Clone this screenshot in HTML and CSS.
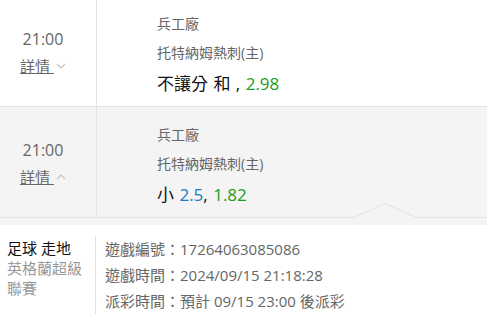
FILE: index.html
```html
<!DOCTYPE html>
<html lang="zh-Hant">

<head>
  <meta charset="UTF-8">
  <title>投注紀錄</title>
  <link rel="stylesheet" href="styles.css">
</head>

<body>

  <div class="bet-list">
    <div class="bet-row">
      <div class="bet-time">
        <div class="time">21:00</div>
        <div class="toggle">
          <a class="details-link">詳情 </a>
          <svg class="chevron" width="10" height="6" viewBox="0 0 10 6">
            <polyline points="1,1 5,5 9,1" fill="none" stroke="#c4c4c4" stroke-width="1.2" />
          </svg>
        </div>
      </div>
      <div class="bet-info">
        <div class="match">兵工廠</div>
        <div class="team">托特納姆熱刺(主)</div>
        <div class="pick">不讓分 和 , <span class="odds">2.98</span></div>
      </div>
    </div>

    <div class="bet-row open">
      <div class="bet-time">
        <div class="time">21:00</div>
        <div class="toggle">
          <a class="details-link">詳情 </a>
          <svg class="chevron" width="10" height="6" viewBox="0 0 10 6">
            <polyline points="1,5 5,1 9,5" fill="none" stroke="#c4c4c4" stroke-width="1.2" />
          </svg>
        </div>
      </div>
      <div class="bet-info">
        <div class="match">兵工廠</div>
        <div class="team">托特納姆熱刺(主)</div>
        <div class="pick">小 <span class="line">2.5</span>, <span class="odds">1.82</span></div>
      </div>
      <svg class="caret" width="64" height="15" viewBox="0 0 64 15">
        <polygon points="0,14.5 32,0.5 64,14.5 64,15 0,15" fill="#f4f4f4" />
        <polyline points="0,14.5 32,0.5 64,14.5" fill="none" stroke="#e2e2e2" stroke-width="1" />
      </svg>
    </div>
  </div>

  <div class="bet-detail">
    <div class="detail-sport">
      <div class="sport">足球 走地</div>
      <div class="league">英格蘭超級聯賽</div>
    </div>
    <div class="detail-info">
      <div>遊戲編號：17264063085086</div>
      <div>遊戲時間：2024/09/15 21:18:28</div>
      <div>派彩時間：預計 09/15 23:00 後派彩</div>
    </div>
  </div>

</body>

</html>
```

FILE: styles.css
```css
html {
  background: #f4f4f4;
}

body {
  margin: 0;
  font-family: "Open Sans", "Noto Sans CJK TC", sans-serif;
  color: #666;
  overflow: hidden;
}

.bet-list {
  margin-top: -4px;
}

.bet-row {
  position: relative;
  display: flex;
  height: 111px;
  box-sizing: border-box;
  border-bottom: 1px solid #e4e4e4;
  background: #fff;
}

.bet-row.open {
  background: #f4f4f4;
}

.bet-time {
  width: 97px;
  box-sizing: border-box;
  padding: 2px 10px 0 0;
  border-right: 1px solid #e2e2e2;
  display: flex;
  flex-direction: column;
  justify-content: center;
  align-items: center;
}

.time {
  font-size: 16px;
  line-height: 26px;
}

.toggle {
  display: flex;
  align-items: center;
  margin-top: 2px;
  font-size: 15px;
  line-height: 24px;
}

.details-link {
  text-decoration: underline;
  white-space: pre;
}

.chevron {
  margin-left: 2px;
}

.bet-info {
  padding: 13px 0 0 60px;
}

.match,
.team {
  font-size: 14px;
  line-height: 29px;
}

.pick {
  margin-top: 2px;
  font-size: 17px;
  line-height: 30px;
  word-spacing: 1px;
  color: #111;
}

.odds {
  color: #1c9c1c;
}

.line {
  color: #2079c0;
}

.caret {
  position: absolute;
  right: 70px;
  bottom: -1px;
}

.bet-detail {
  display: flex;
  margin-top: 7px;
  padding: 10px 0;
  border-top: 1px solid #fff;
  background: #fff;
}

.detail-sport {
  width: 96px;
  box-sizing: border-box;
  padding: 2px 8px 0 7px;
  border-right: 1px solid #e2e2e2;
  font-size: 15px;
  line-height: 20px;
}

.sport {
  color: #111;
}

.league {
  color: #999;
}

.detail-info {
  padding-left: 9px;
  font-size: 15px;
  line-height: 26px;
  color: #666;
}
```
